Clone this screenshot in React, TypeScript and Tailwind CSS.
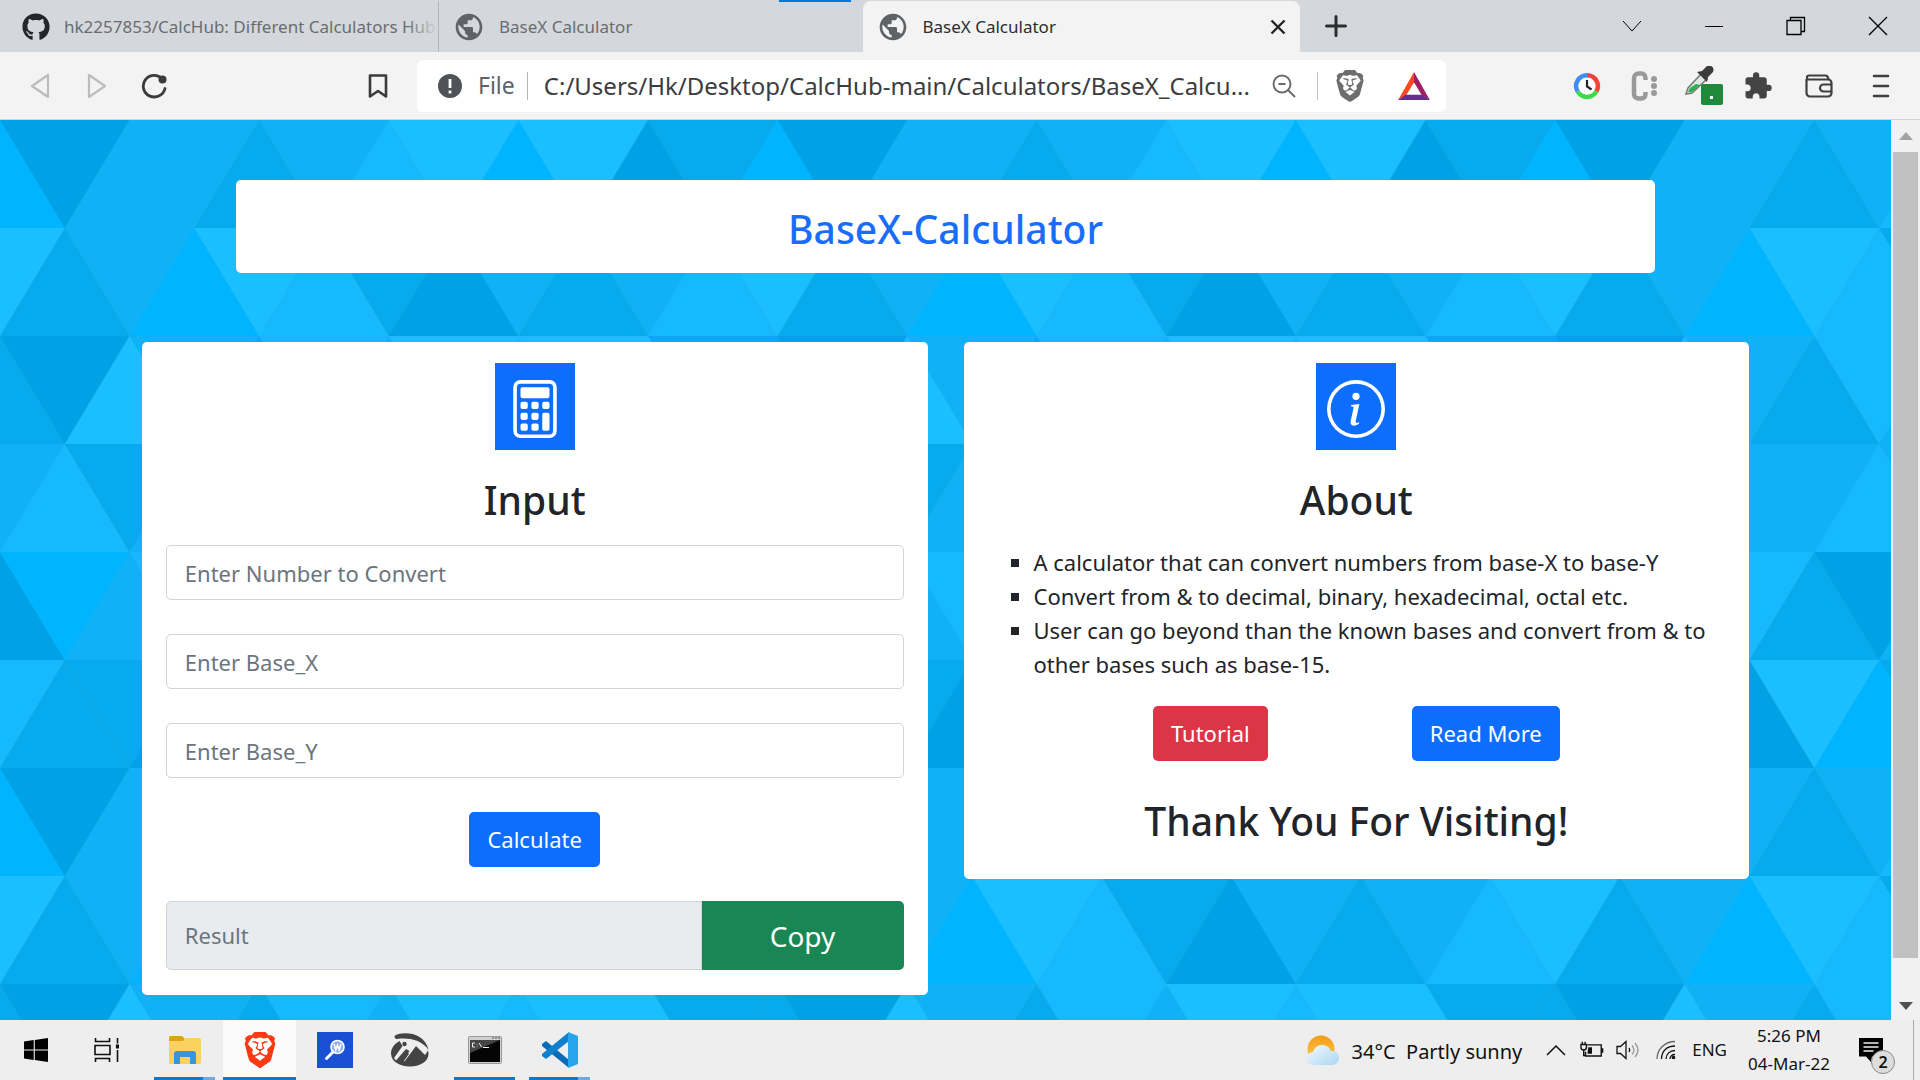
import { useState } from 'react';
import type { ReactNode, FormEvent } from 'react';
import { FaGithub } from 'react-icons/fa';
import { MdPublic, MdExtension } from 'react-icons/md';
import { BsCalculator, BsInfoCircle } from 'react-icons/bs';
import { SiBrave } from 'react-icons/si';

/* ---------- triangle wallpaper ---------- */

const shades: Record<string, string> = {
  B: '#00b4ff',
  L: '#1bbfff',
  l: '#17b9fd',
  M: '#10b2f5',
  m: '#07aaec',
  D: '#00a2e5',
};

// Each row lists its triangles from left to right. Even rows start with an
// upward triangle, odd rows with a downward one, both centred on x = 0.
const rows = [
  'BDMMmMlLBLDm',
  'LmMBLlmDMmMl',
  'mDLMmlMLlLLm',
  'MlmMMlMmLMDl',
  'DBMlmDMlmMLm',
  'lmmDLBmMlDMm',
];

const SIDE = 129.6;
const ROW = 108;

function Wallpaper() {
  return (
    <svg className="absolute inset-0 h-full w-full" aria-hidden="true">
      <defs>
        <pattern id="triangles" width={SIDE * 6} height={ROW * 6} patternUnits="userSpaceOnUse">
          <rect width={SIDE * 6} height={ROW * 6} fill="#10b2f5" />
          {rows.map((row, r) =>
            (row + row[0]).split('').map((shade, i) => {
              const x = (i * SIDE) / 2;
              const up = (i + r) % 2 === 0;
              const base = up ? (r + 1) * ROW : r * ROW;
              const tip = up ? r * ROW : (r + 1) * ROW;
              return (
                <polygon
                  key={`${r}-${i}`}
                  points={`${x - SIDE / 2},${base} ${x + SIDE / 2},${base} ${x},${tip}`}
                  fill={shades[shade]}
                />
              );
            }),
          )}
        </pattern>
      </defs>
      <rect width="100%" height="100%" fill="url(#triangles)" />
    </svg>
  );
}

/* ---------- browser window ---------- */

function Tab({ icon, title, active, children }: { icon: ReactNode; title: string; active?: boolean; children?: ReactNode }) {
  return (
    <div
      className={
        active
          ? 'flex min-w-0 flex-1 items-center gap-3.5 rounded-t-lg bg-[#f3f3f3] px-3.5 text-[#2b2d30]'
          : 'flex min-w-0 flex-1 items-center gap-3.5 pl-3.5 text-[#6a6d70]'
      }
    >
      {icon}
      <span className="min-w-0 flex-1 overflow-hidden text-[17px] whitespace-nowrap">{title}</span>
      {children}
    </div>
  );
}

function TabStrip() {
  return (
    <header className="relative flex h-[52px] justify-between bg-[#d4d7db]">
      <div className="absolute top-0 left-[779px] h-[2px] w-[72px] bg-[#0078d7]" />
      <div className="flex w-[1300px] pt-px">
        <div className="relative flex w-[439px] border-r border-[#b3b6ba] pl-2">
          <Tab icon={<FaGithub className="size-7 shrink-0 text-[#23272b]" />} title="hk2257853/CalcHub: Different Calculators Hub" />
          <div className="absolute top-0 right-0 h-full w-8 bg-linear-to-r from-transparent to-[#d4d7db]" />
        </div>
        <Tab icon={<MdPublic className="size-8 shrink-0 text-[#5f6368]" />} title="BaseX Calculator" />
        <Tab active icon={<MdPublic className="size-8 shrink-0 text-[#5f6368]" />} title="BaseX Calculator">
          <button aria-label="Close tab">
            <svg viewBox="0 0 16 16" className="size-4 text-[#222]" stroke="currentColor" strokeWidth="2.4">
              <path d="M1.5 1.5l13 13M14.5 1.5l-13 13" />
            </svg>
          </button>
        </Tab>
      </div>
      <button aria-label="New tab" className="mr-auto ml-6">
        <svg viewBox="0 0 24 24" className="size-6 text-[#2b2d30]" stroke="currentColor" strokeWidth="3" strokeLinecap="round">
          <path d="M12 2.5v19M2.5 12h19" />
        </svg>
      </button>
      <div className="flex items-center gap-[62px] pr-8 text-black">
        <button aria-label="Search tabs">
          <svg viewBox="0 0 20 20" className="size-5" fill="none" stroke="currentColor">
            <path d="M1 5l9 10 9-10" />
          </svg>
        </button>
        <button aria-label="Minimize">
          <svg viewBox="0 0 20 20" className="size-5" stroke="currentColor">
            <path d="M1 10.5h18" />
          </svg>
        </button>
        <button aria-label="Restore">
          <svg viewBox="0 0 20 20" className="size-5" fill="none" stroke="currentColor" strokeWidth="1.3">
            <path d="M1 4.5h14v14h-14zM4.5 4.5v-3h14v14h-3" />
          </svg>
        </button>
        <button aria-label="Close window">
          <svg viewBox="0 0 20 20" className="size-5" stroke="currentColor" strokeWidth="1.3">
            <path d="M1 1l18 18M19 1l-18 18" />
          </svg>
        </button>
      </div>
    </header>
  );
}

function BatIcon() {
  return (
    <svg viewBox="0 0 34 30" className="h-7 w-8" aria-hidden="true">
      <path d="M17 0L0 30l9-5.5L17 11z" fill="#ff4724" />
      <path d="M17 0l17 30-9-5.5L17 11z" fill="#9e1f63" />
      <path d="M0 30h34l-8-5.5H8z" fill="#662d91" />
    </svg>
  );
}

function Toolbar() {
  return (
    <nav className="flex h-[68px] items-center border-b border-[#cfd1d3] bg-[#f3f3f3] text-[#3b3b3b]">
      <div className="flex w-[417px] items-center justify-between pr-7 pl-7">
        <div className="flex items-center gap-8">
          <button aria-label="Back">
            <svg viewBox="0 0 24 26" className="h-6.5 w-6 text-[#bcbcbc]" fill="none" stroke="currentColor" strokeWidth="2.2" strokeLinejoin="round">
              <path d="M20 2v22L4 13z" />
            </svg>
          </button>
          <button aria-label="Forward">
            <svg viewBox="0 0 24 26" className="h-6.5 w-6 text-[#bcbcbc]" fill="none" stroke="currentColor" strokeWidth="2.2" strokeLinejoin="round">
              <path d="M5 2v22l16-11z" />
            </svg>
          </button>
          <button aria-label="Reload">
            <svg viewBox="0 0 28 26" className="h-6.5 w-7" fill="none" stroke="currentColor" strokeWidth="2.8">
              <path d="M22 5.5a11 10.8 0 1 0 3 10" strokeLinecap="round" />
              <circle cx="22.5" cy="6.5" r="4" fill="currentColor" stroke="none" />
            </svg>
          </button>
        </div>
        <button aria-label="Bookmark this page">
          <svg viewBox="0 0 22 26" className="h-6.5 w-[22px]" fill="none" stroke="currentColor" strokeWidth="2.6" strokeLinejoin="round">
            <path d="M3 2.500h16v21l-8-5.500-8 5.500z" />
          </svg>
        </button>
      </div>
      <div className="flex h-[52px] w-[1029px] items-center rounded-md bg-white pr-4 pl-[21px]">
        <svg viewBox="0 0 24 24" className="size-6 shrink-0" aria-hidden="true">
          <circle cx="12" cy="12" r="12" fill="#4f5256" />
          <path d="M12 5v9M12 16.5v3" stroke="#fff" strokeWidth="2.8" />
        </svg>
        <span className="pl-4 text-[23px] text-[#5f6368]">File</span>
        <div className="ml-3 h-7 w-px bg-[#b5b5b5]" />
        <input
          aria-label="Address"
          className="ml-4 min-w-0 flex-1 bg-transparent text-[24px] text-[#3b3d40] outline-none"
          defaultValue="C:/Users/Hk/Desktop/CalcHub-main/Calculators/BaseX_Calcu..."
        />
        <button aria-label="Zoom">
          <svg viewBox="0 0 26 26" className="size-6.5 text-[#6b6b6b]" fill="none" stroke="currentColor" strokeWidth="1.9">
            <circle cx="11" cy="11" r="8.5" />
            <path d="M17 17l7 7M7.500 11h7" />
          </svg>
        </button>
        <div className="mr-4 ml-5 h-7 w-px bg-[#c4c4c4]" />
        <button aria-label="Brave Shields" className="mr-8">
          <SiBrave className="size-8 text-[#6d6d6d]" />
        </button>
        <button aria-label="Brave Rewards">
          <BatIcon />
        </button>
      </div>
      <div className="ml-auto flex items-center gap-7 pr-[27px]">
        <button aria-label="Time tracker">
          <svg viewBox="0 0 28 28" className="size-7" fill="none">
            <circle cx="14" cy="14" r="9.5" fill="#fff" />
            <g strokeWidth="4.5">
              <path d="M14 3.200a10.800 10.800 0 0 1 9.400 16.200" stroke="#f44336" />
              <path d="M23.400 19.400a10.800 10.800 0 0 1-18.800 0" stroke="#3bdc4a" />
              <path d="M4.600 19.400a10.800 10.800 0 0 1 9.400-16.200" stroke="#3f8cf7" />
            </g>
            <path d="M14 8v6.500l4.500 3" stroke="#222" strokeWidth="2.2" />
          </svg>
        </button>
        <button aria-label="Clipboard extension">
          <svg viewBox="0 0 28 30" className="size-7.5 text-[#999]" fill="none" stroke="currentColor" strokeWidth="4.5">
            <path d="M15.500 9V7a4 4.500 0 0 0-4-4.500h-3a4.500 4.500 0 0 0-4.500 4.500v16a4.500 4.500 0 0 0 4.500 4.500h3a4 4.500 0 0 0 4-4.500v-2" />
            <g fill="currentColor" stroke="none">
              <circle cx="24" cy="8" r="3" />
              <circle cx="24" cy="15" r="3" />
              <circle cx="24" cy="22" r="3" />
            </g>
          </svg>
        </button>
        <button aria-label="Colour picker" className="-ml-1">
          <svg viewBox="0 0 40 40" className="size-10">
            <path d="M3 28l2-6L18 8l6 5L9 27z" fill="#dfe6e3" stroke="#777" strokeWidth="1.5" />
            <path d="M5 26l2-4 6-4 4 1-8 7z" fill="#27b34b" />
            <path d="M14 6l5-1 5-5c4-2 8 2 6 6l-5 5-1 5z" fill="#3c3c3c" />
            <rect x="18" y="18" width="22" height="21" rx="2" fill="#1f8a3b" />
            <rect x="27" y="30" width="3" height="3" fill="#fff" />
          </svg>
        </button>
        <button aria-label="Extensions" className="-ml-2">
          <MdExtension className="size-7.5 text-[#444]" />
        </button>
        <button aria-label="Wallet" className="ml-1">
          <svg viewBox="0 0 28 24" className="h-6 w-7" fill="none" stroke="#3f3f3f" strokeWidth="2.2" strokeLinejoin="round">
            <path d="M1.500 5v14a3.500 3.500 0 0 0 3.500 3.500h18a3.500 3.500 0 0 0 3.500-3.500V9a3.500 3.500 0 0 0-3.500-3.500H3.500C1.500 5.500 1.200 1.500 4 1.500h16.500c1.500 0 2.500 1.200 3 3.500M26.500 10.500h-8a3.500 3.500 0 0 0 0 7h8" />
          </svg>
        </button>
        <button aria-label="Menu" className="ml-2">
          <svg viewBox="0 0 24 26" className="h-6.5 w-6" stroke="#3f3f3f" strokeWidth="2.6" strokeLinecap="round">
            <path d="M5 3h14M5 13h14M5 23h14" />
          </svg>
        </button>
      </div>
    </nav>
  );
}

function Scrollbar() {
  return (
    <div className="flex w-[29px] shrink-0 flex-col bg-[#f1f1f1]">
      <div className="flex h-8 items-center justify-center">
        <svg viewBox="0 0 14 8" className="h-2 w-3.5">
          <path d="M0 8l7-8 7 8z" fill="#a3a3a3" />
        </svg>
      </div>
      <div className="flex-1 px-0.5">
        <div className="h-[96%] bg-[#c1c1c1]" />
      </div>
      <div className="flex h-7 items-center justify-center">
        <svg viewBox="0 0 14 8" className="h-2 w-3.5">
          <path d="M0 0l7 8 7-8z" fill="#505050" />
        </svg>
      </div>
    </div>
  );
}

/* ---------- calculator page ---------- */

function Card({ icon, title, children }: { icon: ReactNode; title: string; children: ReactNode }) {
  return (
    <section className="flex flex-1 flex-col items-center rounded-[5px] bg-white px-6 pt-[21px] pb-[25px]">
      <div className="flex h-[87px] w-20 items-center justify-center bg-[#0d6efd] pt-1 text-white">{icon}</div>
      <h2 className="mt-[26px] mb-[21px] text-[39px] leading-12 font-medium">{title}</h2>
      {children}
    </section>
  );
}

const fieldClass =
  'h-[55px] w-full rounded-[5px] border border-[#ced4da] px-[18px] text-[22px] outline-none placeholder:text-[#6c757d]';

function InputCard() {
  const [number, setNumber] = useState('');
  const [baseX, setBaseX] = useState('');
  const [baseY, setBaseY] = useState('');
  const [result, setResult] = useState('');

  const calculate = (e: FormEvent) => {
    e.preventDefault();
    const to = Number(baseY);
    const value = parseInt(number, Number(baseX));
    setResult(Number.isNaN(value) || to < 2 || to > 36 ? '' : value.toString(to));
  };

  return (
    <Card icon={<BsCalculator className="size-[58px]" />} title="Input">
      <form onSubmit={calculate} className="flex w-full flex-col items-center gap-[34px]">
        <input aria-label="Number to convert" placeholder="Enter Number to Convert" className={fieldClass} value={number} onChange={(e) => setNumber(e.target.value)} />
        <input aria-label="Base X" placeholder="Enter Base_X" className={fieldClass} value={baseX} onChange={(e) => setBaseX(e.target.value)} />
        <input aria-label="Base Y" placeholder="Enter Base_Y" className={fieldClass} value={baseY} onChange={(e) => setBaseY(e.target.value)} />
        <button type="submit" className="h-[55px] rounded-[5px] bg-[#0d6efd] px-[18px] text-[22px] text-white">
          Calculate
        </button>
        <div className="flex h-[69px] w-full">
          <input aria-label="Result" readOnly placeholder="Result" value={result} className="min-w-0 flex-1 rounded-l-[5px] border border-[#ced4da] bg-[#e9ecef] px-[18px] text-[22px] outline-none placeholder:text-[#6c757d]" />
          <button type="button" onClick={() => navigator.clipboard?.writeText(result)} className="w-[202px] rounded-r-[5px] bg-[#198754] text-[28px] text-white">
            Copy
          </button>
        </div>
      </form>
    </Card>
  );
}

function AboutCard() {
  return (
    <Card icon={<BsInfoCircle className="size-[58px]" />} title="About">
      <ul className="w-full list-[square] pl-[46px] text-[22px] leading-[34px]">
        <li>A calculator that can convert numbers from base-X to base-Y</li>
        <li>Convert from &amp; to decimal, binary, hexadecimal, octal etc.</li>
        <li>User can go beyond than the known bases and convert from &amp; to other bases such as base-15.</li>
      </ul>
      <div className="mt-[25px] flex justify-center gap-36">
        <a href="#tutorial" className="flex h-[55px] items-center rounded-[5px] bg-[#dc3545] px-[18px] text-[22px] text-white">
          Tutorial
        </a>
        <a href="#more" className="flex h-[55px] items-center rounded-[5px] bg-[#0d6efd] px-[18px] text-[22px] text-white">
          Read More
        </a>
      </div>
      <h2 className="mt-9 mb-[9px] text-[39px] leading-12 font-medium">Thank You For Visiting!</h2>
    </Card>
  );
}

/* ---------- taskbar ---------- */

function TaskButton({ label, line, active, children }: { label: string; line?: 'full' | 'stack'; active?: boolean; children: ReactNode }) {
  return (
    <button aria-label={label} className={active ? 'flex w-[73px] flex-col items-center bg-[#fbfbfb]' : 'flex w-[61px] flex-col items-center'}>
      <span className="flex flex-1 items-center justify-center pt-0.5">{children}</span>
      <span className="flex h-[3px] w-full">
        {line && <span className="flex-1 bg-[#0f78c8]" />}
        {line === 'stack' && <span className="w-3 bg-[#72a9dc]" />}
      </span>
    </button>
  );
}

function Taskbar() {
  return (
    <footer className="flex h-[60px] justify-between bg-[#eee] text-[#111]">
      <div className="flex">
        <div className="mr-[17px] flex gap-[10px] pl-[5px]">
          <TaskButton label="Start">
            <svg viewBox="0 0 24 24" className="size-6">
              <path d="M0 3.400l9.700-1.300v9.400H0zM10.800 1.900L24 0v11.500H10.800zM0 12.500h9.700v9.400L0 20.600zM10.800 12.500H24V24l-13.200-1.900z" />
            </svg>
          </TaskButton>
          <TaskButton label="Task view">
            <svg viewBox="0 0 25 24" className="h-6 w-[25px]" fill="none" stroke="#111" strokeWidth="1.6">
              <path d="M1.500 0v3.500h14V0M1 7.500h15v9H1zM1.500 24v-3.500h14V24M23.500 0v5.500M23.500 12v12" />
              <path d="M23.500 6.500v4" strokeWidth="3.2" />
            </svg>
          </TaskButton>
        </div>
        <div className="flex">
          <TaskButton label="File Explorer" line="stack">
            <svg viewBox="0 0 32 28" className="h-7 w-8">
              <path d="M0 2a2 2 0 0 1 2-2h11l3 3-3 4H0z" fill="#d9a514" />
              <path d="M0 5h14l3-3h13a2 2 0 0 1 2 2v22a2 2 0 0 1-2 2H0z" fill="#fbd25e" />
              <path d="M5 28V18a3 3 0 0 1 3-3h16a3 3 0 0 1 3 3v10h-6v-7H11v7z" fill="#3995d8" />
            </svg>
          </TaskButton>
          <div className="flex pl-2">
            <TaskButton label="Brave" line="full" active>
              <span className="relative flex h-9 w-9 items-center justify-center">
                <span className="absolute h-6 w-5 rounded-full bg-white" />
                <SiBrave className="relative size-9 text-[#fb3a12]" />
              </span>
            </TaskButton>
          </div>
          <div className="flex gap-[14px] pl-2">
            <TaskButton label="Word search">
              <svg viewBox="0 0 36 36" className="size-9">
                <path d="M0 0h36v36H0z" fill="#1a50d3" />
                <circle cx="20.5" cy="15" r="6.5" fill="#8fb0f0" stroke="#fff" strokeWidth="1.6" />
                <path d="M16 20l-6.500 6.500" stroke="#fff" strokeWidth="3" strokeLinecap="round" />
                <path d="M17 12l1.800 6 1.700-5 1.700 5L24 12" fill="none" stroke="#fff" strokeWidth="1.5" />
              </svg>
            </TaskButton>
            <TaskButton label="Image viewer">
              <svg viewBox="0 0 38 34" className="h-8.5 w-[38px]" fill="none">
                <path d="M4 2.500C12-2 34-1 37.500 17 31 7 18 4.500 6 6 3.500 6 3 3.500 4 2.500z" fill="#444" />
                <path d="M8.500 8C3 11 0 15.500 0 20.500 0 28 8 33.500 19 33.500S37.500 28 37.500 20.500c0-1-.2-2-.5-3L34 22 25 13 13.500 28.500 12 27l6.500-9-3.500-2L5 27.500 3 25l8.500-12z" fill="#444" />
                <path d="M10 30l7-10" stroke="#444" strokeWidth="2.5" />
                <circle cx="13.500" cy="11" r="2.200" fill="#444" />
              </svg>
            </TaskButton>
            <TaskButton label="Command Prompt" line="full">
              <svg viewBox="0 0 34 28" className="h-7 w-[34px]">
                <rect x=".5" y=".5" width="33" height="27" rx="1" fill="#d0d0d0" stroke="#999" />
                <path d="M2 4h30v22H2z" fill="#050505" />
                <path d="M2 4h30L2 17z" fill="#454545" />
                <path d="M7 7H4.500v4H7M9 8v.5M9 10v.5M11 7l2.500 4M15 11.500h6" stroke="#eee" fill="none" />
                <path d="M24 2h2M27 2h2M30 2h2" stroke="#777" strokeWidth="1.5" />
              </svg>
            </TaskButton>
            <TaskButton label="Visual Studio Code" line="stack">
              <svg viewBox="0 0 36 36" className="size-9">
                <path d="M0 12l4-3 23 19v8L0 14z" fill="#0a6cb8" />
                <path d="M0 24l4 3L27 9V0L0 22z" fill="#1180cc" />
                <path d="M26 0l10 4v28l-10 4V0z" fill="#26a4ec" />
              </svg>
            </TaskButton>
          </div>
        </div>
      </div>

      <div className="flex items-center">
        <svg viewBox="0 0 34 30" className="h-7.5 w-8.5" aria-hidden="true">
          <defs>
            <linearGradient id="sun" x2="0" y2="1">
              <stop stopColor="#f59a1b" />
              <stop offset="1" stopColor="#ffd34e" />
            </linearGradient>
            <linearGradient id="cloud" x2="1" y2="1">
              <stop stopColor="#f5fbff" />
              <stop offset="1" stopColor="#a9d6f3" />
            </linearGradient>
          </defs>
          <circle cx="15" cy="14" r="13.5" fill="url(#sun)" />
          <path d="M7 30a6.500 6.500 0 0 1 0-13 9.500 9.500 0 0 1 18-1c5-.5 8 3 8 7a7 7 0 0 1-7 7z" fill="url(#cloud)" />
        </svg>
        <span className="ml-3 pt-1 text-[20px] whitespace-pre">34°C  Partly sunny</span>
        <svg viewBox="0 0 20 12" className="ml-6 h-3 w-5" fill="none" stroke="#111" strokeWidth="1.5">
          <path d="M1 11l9-9 9 9" />
        </svg>
        <svg viewBox="0 0 26 18" className="ml-3.5 h-[18px] w-6" fill="none" stroke="#111" strokeWidth="1.5">
          <path d="M8 3.500h15v12H6V11M24.500 7v5M1 3h6v3a3 3 0 0 1-6 0zM2.500 0v3M5.500 0v3M4 9v6h2" />
          <path d="M9 6h4v7H8z" fill="#111" stroke="none" />
        </svg>
        <svg viewBox="0 0 24 20" className="ml-3 h-5 w-6" fill="none" stroke="#111" strokeWidth="1.3">
          <path d="M1 6.500h3.500L10 1.500v17l-5.500-5H1zM13 8q1.500 2 0 4" />
          <path d="M16 5.500q4 4.500 0 9M19 3q6 7 0 14" stroke="#999" />
        </svg>
        <svg viewBox="0 0 20 20" className="ml-4 size-5" fill="none" stroke="#111" strokeWidth="1.3">
          <path d="M1 19C1 9 9 1.500 19 1.500" stroke="#666" />
          <path d="M5.500 19C5.500 11 11 6 19 6M10 19c0-5 4-8.500 9-8.500M14 19c0-2.500 2-4.500 5-4.500" />
          <circle cx="17.5" cy="17.5" r="1.8" fill="#111" stroke="none" />
        </svg>
        <span className="ml-4 text-[17px]">ENG</span>
        <div className="ml-4 flex w-[92px] flex-col items-center text-[17px] leading-7 whitespace-nowrap">
          <span>5:26 PM</span>
          <span>04-Mar-22</span>
        </div>
        <button aria-label="Notifications, 2 new" className="relative ml-6 flex h-10 w-10 items-start pt-2">
          <svg viewBox="0 0 24 24" className="size-6">
            <path d="M0 0h24v18.500H13L12 24l-5-5.500H0z" fill="#000" />
            <path d="M4.500 5h15M4.500 9h15M4.500 13h10" stroke="#eee" strokeWidth="1.3" />
          </svg>
          <span className="absolute top-5 left-3 flex size-6 items-center justify-center rounded-full border border-[#888] bg-[#ddd] text-[16px] font-semibold">2</span>
        </button>
        <div className="ml-3.5 h-full w-px bg-[#aaa]" />
        <div className="w-1.5" />
      </div>
    </footer>
  );
}

export default function App() {
  return (
    <div className="flex min-h-screen flex-col font-['Noto_Sans','Open_Sans',sans-serif] text-[#212529]">
      <TabStrip />
      <Toolbar />
      <div className="flex flex-1">
        <main className="relative flex-1 overflow-hidden">
          <Wallpaper />
          <div className="relative flex flex-col items-center pt-[60px] pb-6">
            <h1 className="w-3/4 rounded-[5px] bg-white pt-[25px] pb-5 text-center text-[39px] leading-12 font-medium text-[#1a6dfb]">
              BaseX-Calculator
            </h1>
            <div className="mt-[69px] flex w-[85%] items-start gap-9">
              <InputCard />
              <AboutCard />
            </div>
          </div>
        </main>
        <Scrollbar />
      </div>
      <Taskbar />
    </div>
  );
}
